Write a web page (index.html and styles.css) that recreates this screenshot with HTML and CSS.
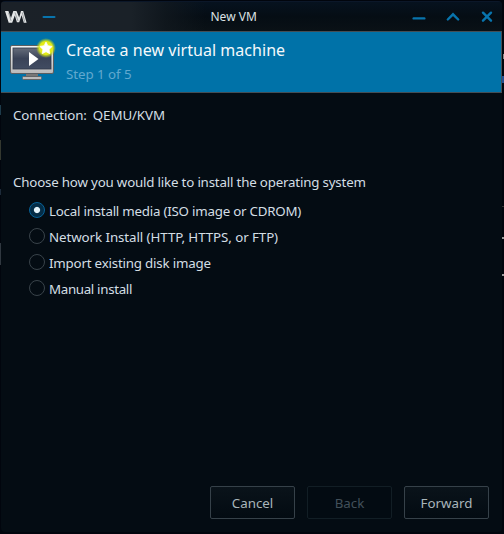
FILE: index.html
```html
<!DOCTYPE html>
<html lang="en">
<head>
<meta charset="utf-8">
<title>New VM</title>
<link rel="stylesheet" href="styles.css">
</head>
<body>
<div class="desktop">
  <main class="window">
    <header class="titlebar">
      <div class="left">
        <svg class="logo" width="22" height="12" viewBox="0 0 22 12" fill="#e4e6e7"><path d="M0 0h3.4L6 7 8.3 0h3.2l2.7 6.5L16 0h2.2L21.6 11.7H18.8L16.6 4.2 14.2 11.2H11.9L9.8 4.6 7.2 11.7H3.7z"/><path d="M3.6 1.8L6 9.8M10 1.5L13 10M17.3 1.5L19.6 10.6" fill="none" stroke="#6f767b" stroke-width=".6"/></svg>
        <svg width="14" height="4" viewBox="0 0 14 4"><path d="M1.5 2h11" stroke="#0874ad" stroke-width="2" stroke-linecap="round"/></svg>
      </div>
      <div class="caption">New VM</div>
      <div class="controls">
        <svg width="14" height="14" viewBox="0 0 14 14"><path d="M1.7 8.4h10.6"/></svg>
        <svg width="14" height="14" viewBox="0 0 14 14"><path d="M1.8 9.5L7 4.3l5.2 5.2"/></svg>
        <svg width="14" height="14" viewBox="0 0 14 14"><path d="M3 2.7l8 8M11 2.7l-8 8"/></svg>
      </div>
    </header>
    <section class="banner">
      <svg class="monitor" width="48" height="44" viewBox="0 0 48 44">
        <defs>
          <linearGradient id="screen" x1="0" y1="0" x2="0" y2="1"><stop offset="0" stop-color="#666d7b"/><stop offset=".5" stop-color="#3a4358"/><stop offset="1" stop-color="#414c62"/></linearGradient>
          <linearGradient id="frame" x1="0" y1="0" x2="0" y2="1"><stop offset="0" stop-color="#f2f2f2"/><stop offset="1" stop-color="#b9b9b9"/></linearGradient>
          <radialGradient id="glow"><stop offset="0" stop-color="#f5f51c"/><stop offset=".65" stop-color="#dfe916"/><stop offset="1" stop-color="#b5d21b" stop-opacity="0"/></radialGradient>
        </defs>
        <path d="M18 36h12v5H18z" fill="#777"/>
        <rect x="14.5" y="38.5" width="19" height="3" rx="1" fill="#bcbcbc" stroke="#626668"/>
        <rect x="2.5" y="7.5" width="43" height="28" rx="1.5" fill="url(#frame)" stroke="#5b5e61"/>
        <rect x="5" y="10" width="38" height="21" fill="url(#screen)" stroke="#30394a" stroke-width=".8"/>
        <path d="M21 14l9.5 7-9.5 7z" fill="#fff"/>
        <circle cx="38" cy="10" r="10" fill="url(#glow)"/>
        <path d="M38 4l1.9 3.7 4.3.7-3.1 3 .7 4.3-3.8-2-3.8 2 .7-4.3-3.1-3 4.3-.7z" fill="#fff" stroke="#fff" stroke-linejoin="round" stroke-width=".7"/>
      </svg>
      <div class="heading">
        <h1>Create a new virtual machine</h1>
        <p>Step 1 of 5</p>
      </div>
    </section>
    <section class="content">
      <div class="connection"><span>Connection:</span><span>QEMU/KVM</span></div>
      <div class="question">Choose how you would like to install the operating system</div>
      <div class="options">
        <label class="option media"><span class="radio checked"></span><span class="text">Local install media (ISO image or CDROM)</span></label>
        <label class="option network"><span class="radio"></span><span class="text">Network Install (HTTP, HTTPS, or FTP)</span></label>
        <label class="option import"><span class="radio"></span><span class="text">Import existing disk image</span></label>
        <label class="option manual"><span class="radio"></span><span class="text">Manual install</span></label>
      </div>
    </section>
    <footer class="actions">
      <button>Cancel</button>
      <button disabled>Back</button>
      <button>Forward</button>
    </footer>
  </main>
</div>
</body>
</html>
```
FILE: styles.css
```css
* { box-sizing: border-box; }
body { margin: 0; font: 13.33px/18px "Noto Sans", sans-serif; color: #d3dee4; }
.desktop {
  width: 504px;
  height: 534px;
  padding: 1px 2px 2px 1px;
  background:
    linear-gradient(#888, #888) 503px 54px / 1px 5px no-repeat,
    linear-gradient(#244f91, #244f91) 502px 76px / 2px 7px no-repeat,
    linear-gradient(#333, #333) 501px 206px / 3px 1px no-repeat,
    linear-gradient(#999, #999) 501px 237px / 3px 2px no-repeat,
    linear-gradient(#999, #999) 501px 274px / 3px 2px no-repeat,
    linear-gradient(#1d3b4b, #1d3b4b) 0 105px / 1px 10px no-repeat,
    linear-gradient(#34382f, #34382f) 0 140px / 1px 20px no-repeat,
    linear-gradient(#1d2b3a, #1d2b3a) 0 189px / 1px 6px no-repeat,
    linear-gradient(#303840, #303840) 0 243px / 1px 22px no-repeat,
    #01050d;
}
.window {
  display: flex;
  flex-direction: column;
  width: 501px;
  height: 531px;
  background: #040c13;
  border-radius: 4px;
  overflow: hidden;
}
.titlebar {
  display: grid;
  grid-template-columns: 209.5px auto 1fr;
  align-items: center;
  height: 30px;
  flex: none;
  border-top: 1px solid #0b1729;
  background: linear-gradient(90deg, #1b2128 0, #1a2128 130px, rgba(18, 25, 31, .75) 165px, transparent 205px), linear-gradient(#06121f, #050d14 50%, #0a1116);
}
.left { display: flex; align-items: center; gap: 15px; padding-left: 4px; }
.caption { font-size: 12px; color: #dce1e4; line-height: 28px; }
.controls { display: flex; justify-content: flex-end; gap: 20px; padding-right: 8px; }
.controls svg { fill: none; stroke: #0874ad; stroke-width: 2.4; stroke-linecap: round; }
.banner {
  display: flex;
  height: 62px;
  flex: none;
  border: 1px solid #444e55;
  border-left: 0;
  background: #0072a8;
  padding: 6px 0 0 7px;
}
.heading { padding: 1px 0 0 10px; }
h1 { margin: 0; font-size: 16px; line-height: 22px; font-weight: 400; letter-spacing: .035px; color: #f5f9fb; }
p { margin: 4px 0 0; line-height: 18px; letter-spacing: -.05px; color: #60a9cf; }
.content { flex: 1; padding: 13px 12px 0; }
.connection { display: flex; gap: 6px; height: 67px; letter-spacing: -.11px; }
.question { letter-spacing: -.19px; }
.options { padding: 8px 0 0 16px; }
.option { display: flex; height: 26px; padding-top: 3px; gap: 4px; }
.media { letter-spacing: -.23px; }
.network { letter-spacing: -.08px; }
.import { letter-spacing: -.2px; }
.manual { letter-spacing: -.33px; }
.radio { width: 16px; height: 16px; flex: none; border: 1px solid #39434a; border-radius: 50%; }
.radio.checked { border: 1px solid #07639a; background: radial-gradient(circle, #e4f3fa 0 2.6px, #052d47 3.6px); }
.actions { display: flex; justify-content: flex-end; gap: 12px; padding: 0 13px 13px 0; }
button {
  width: 85px;
  height: 33px;
  padding: 0;
  font: inherit;
  color: #a9b5ba;
  border: 1px solid #364149;
  border-radius: 2px;
  background: linear-gradient(#0a131a, #030b12);
}
button:disabled { color: #42505a; border-color: #121e25; background: #030b12; }
```
